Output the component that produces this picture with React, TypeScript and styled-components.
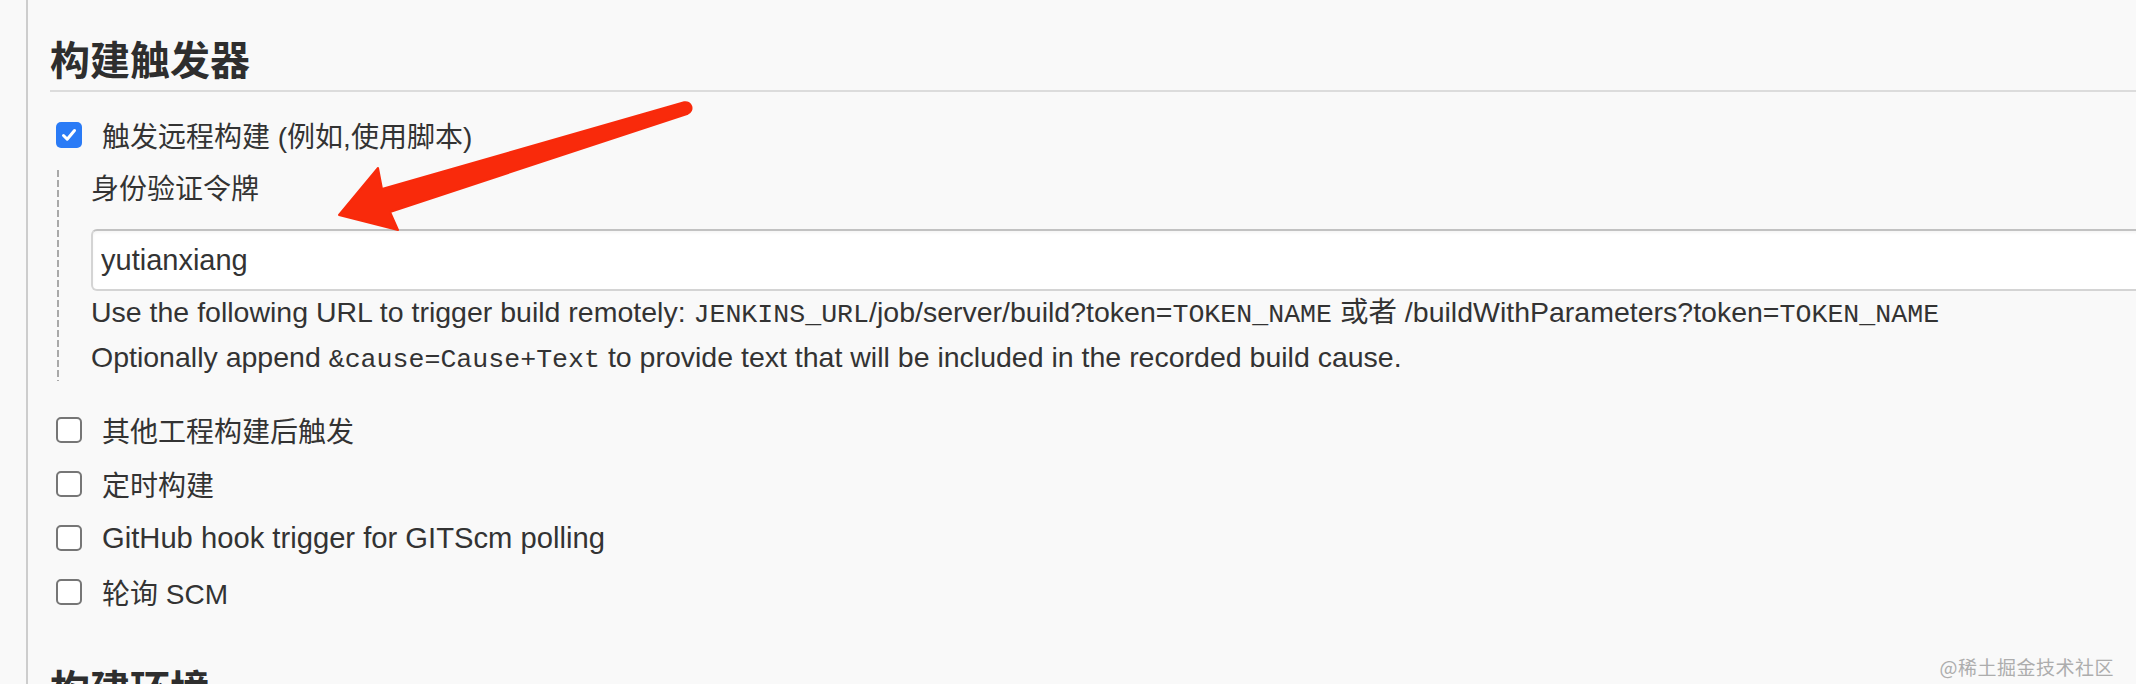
import styled, { createGlobalStyle } from 'styled-components'

const GlobalStyle = createGlobalStyle`
  html, body {
    margin: 0;
    padding: 0;
    background: #f9f9f9;
    overflow: hidden;
  }
  body {
    font-family: "Liberation Sans", "Noto Sans CJK SC", sans-serif;
    color: #333;
  }
`

interface OptionProps {
  label: string
  checked?: boolean
  latin?: boolean
}

const Option: React.FC<OptionProps> = ({ label, checked = false, latin = false }) => (
  <OptionRow>
    <Box $checked={checked}>
      {checked && (
        <svg width="18" height="18" viewBox="0 0 18 18">
          <path d="M3.5 9.5 L7.2 13.2 L14.5 4.5" fill="none" stroke="#fff" strokeWidth="3" strokeLinecap="round" strokeLinejoin="round" />
        </svg>
      )}
    </Box>
    <OptionText $latin={latin}>{label}</OptionText>
  </OptionRow>
)

const App = () => {
  return (
    <Page>
      <GlobalStyle />
      <Panel>
        <SectionTitle>构建触发器</SectionTitle>
        <FirstOption>
          <Option label="触发远程构建 (例如,使用脚本)" checked />
        </FirstOption>
        <NestedBlock>
          <FieldLabel>身份验证令牌</FieldLabel>
          <TokenInput defaultValue="yutianxiang" />
          <Help>
            <div>
              Use the following URL to trigger build remotely: <Code>JENKINS_URL</Code>/job/server/build?token=<Code>TOKEN_NAME</Code> 或者 /buildWithParameters?token=<Code>TOKEN_NAME</Code>
            </div>
            <div>
              Optionally append <Code>&amp;cause=Cause+Text</Code> to provide text that will be included in the recorded build cause.
            </div>
          </Help>
        </NestedBlock>
        <OptionList>
          <Option label="其他工程构建后触发" />
          <Option label="定时构建" />
          <Option label="GitHub hook trigger for GITScm polling" latin />
          <Option label="轮询 SCM" />
        </OptionList>
        <SectionTitle $next>构建环境</SectionTitle>
      </Panel>

      <Arrow width="2136" height="684" viewBox="0 0 2136 684">
        <path
          d="M339 215 L378 168 L382 189 L684.2 102.3 A6 6 0 0 1 687.8 113.7 L390 212 L398 230 Z"
          fill="#f92a0b"
          stroke="#f92a0b"
          strokeWidth="2"
          strokeLinejoin="round"
        />
      </Arrow>
      <Watermark>@稀土掘金技术社区</Watermark>
    </Page>
  )
}

const Page = styled.div`
  position: relative;
  width: 2136px;
  height: 684px;
  overflow: hidden;
  background: #f9f9f9;
`

const Panel = styled.div`
  display: flow-root;
  margin-left: 26px;
  height: 100%;
  border-left: 2px solid #cdcdcd;
  padding-left: 22px;
`

const SectionTitle = styled.h2<{ $next?: boolean }>`
  margin: ${({ $next }) => ($next ? '46px' : '36px')} 0 0;
  padding-bottom: 4px;
  font-size: 40px;
  line-height: 50px;
  font-weight: 700;
  color: #2e2e2e;
  border-bottom: 2px solid #dcdcdc;
`

const FirstOption = styled.div`
  margin-top: 16px;
`

const OptionRow = styled.label`
  display: flex;
  align-items: center;
  gap: 20px;
  height: 54px;
  padding-left: 6px;
`

const Box = styled.span<{ $checked?: boolean }>`
  display: inline-flex;
  align-items: center;
  justify-content: center;
  box-sizing: border-box;
  width: 26px;
  height: 26px;
  border-radius: 5px;
  background: ${({ $checked }) => ($checked ? '#2a7bf6' : '#fff')};
  border: ${({ $checked }) => ($checked ? 'none' : '2px solid #767676')};
`

const OptionText = styled.span<{ $latin?: boolean }>`
  font-size: ${({ $latin }) => ($latin ? '29.2px' : '28px')};
  color: #333;
`

const NestedBlock = styled.div`
  margin: 8px 0 22px 7px;
  padding-left: 34px;
  background: linear-gradient(#a9a9a9 70%, transparent 0) left top / 2px 10px repeat-y;
`

const FieldLabel = styled.div`
  font-size: 28px;
  line-height: 40px;
  color: #333;
`

const TokenInput = styled.input`
  display: block;
  box-sizing: border-box;
  width: 2100px;
  height: 62px;
  margin-top: 19px;
  padding: 0 8px;
  font-family: "Liberation Sans", sans-serif;
  font-size: 29px;
  color: #333;
  background: #fff;
  border: 2px solid #d4d4d4;
  border-top-color: #c2c2c2;
  border-radius: 6px;
  box-shadow: inset 0 2px 3px rgba(0, 0, 0, 0.04);
  outline: none;
`

const Help = styled.div`
  font-size: 28.5px;
  line-height: 42px;
  color: #333;
  white-space: nowrap;
`

const Code = styled.code`
  font-family: "Liberation Mono", monospace;
  font-size: 26.6px;
`

const OptionList = styled.div`
  display: flex;
  flex-direction: column;
`

const Arrow = styled.svg`
  position: absolute;
  top: 0;
  left: 0;
  pointer-events: none;
`

const Watermark = styled.div`
  position: absolute;
  right: 22px;
  bottom: 5px;
  font-family: "Noto Sans CJK SC", sans-serif;
  font-size: 19px;
  line-height: 24px;
  color: #adadad;
  letter-spacing: 0.5px;
`

export default App
